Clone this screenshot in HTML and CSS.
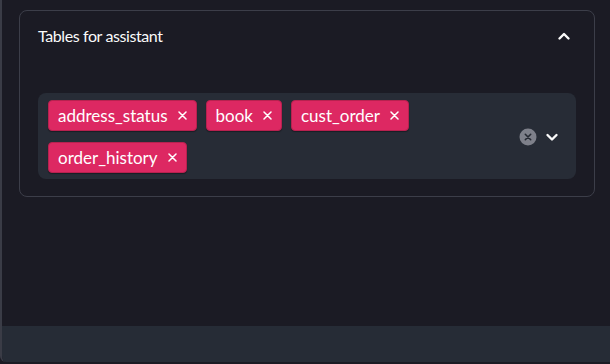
FILE: index.html
```html
<!DOCTYPE html>
<html lang="en">
<head>
    <meta charset="UTF-8">
    <meta name="viewport" content="width=device-width, initial-scale=1.0">
    <title>Tables for assistant</title>
    <link rel="stylesheet" href="styles.css">
</head>
<body>

<div class="frame">
    <div class="main">
        <div class="expander">
            <div class="expander-header">
                <span class="expander-title">Tables for assistant</span>
                <svg class="chevron" width="14" height="10" viewBox="0 0 14 10">
                    <polyline points="2.5,7.5 7,3 11.5,7.5" fill="none" stroke="#fafafa" stroke-width="2.4" stroke-linecap="round" stroke-linejoin="round"/>
                </svg>
            </div>
            <div class="expander-body">
                <div class="multiselect">
                    <div class="tags">
                        <span class="tag">address_status <svg class="tag-x" width="9" height="9" viewBox="0 0 9 9"><path d="M1 1 L8 8 M8 1 L1 8" stroke="#fff" stroke-width="1.5" stroke-linecap="round"/></svg></span>
                        <span class="tag">book <svg class="tag-x" width="9" height="9" viewBox="0 0 9 9"><path d="M1 1 L8 8 M8 1 L1 8" stroke="#fff" stroke-width="1.5" stroke-linecap="round"/></svg></span>
                        <span class="tag">cust_order <svg class="tag-x" width="9" height="9" viewBox="0 0 9 9"><path d="M1 1 L8 8 M8 1 L1 8" stroke="#fff" stroke-width="1.5" stroke-linecap="round"/></svg></span>
                        <span class="tag">order_history <svg class="tag-x" width="9" height="9" viewBox="0 0 9 9"><path d="M1 1 L8 8 M8 1 L1 8" stroke="#fff" stroke-width="1.5" stroke-linecap="round"/></svg></span>
                    </div>
                    <div class="controls">
                        <svg class="clear" width="18" height="18" viewBox="0 0 18 18">
                            <circle cx="9" cy="9" r="8.5" fill="#7e808a"/>
                            <path d="M6.3 6.3 L11.7 11.7 M11.7 6.3 L6.3 11.7" stroke="#262a33" stroke-width="1.6" stroke-linecap="round"/>
                        </svg>
                        <svg class="chevron" width="14" height="10" viewBox="0 0 14 10">
                            <polyline points="2.5,3 7,7.5 11.5,3" fill="none" stroke="#fafafa" stroke-width="2.4" stroke-linecap="round" stroke-linejoin="round"/>
                        </svg>
                    </div>
                </div>
            </div>
        </div>
    </div>
    <div class="bottom-bar"></div>
</div>

</body>
</html>
```

FILE: styles.css
```css
body {
    margin: 0;
    height: 364px;
    overflow: hidden;
    background-color: #1b1b24;
    font-family: Lato, "Liberation Sans", sans-serif;
    color: #fafafa;
}
.frame {
    position: relative;
    height: 362px;
    display: flex;
    flex-direction: column;
    border-left: 2px solid #3a3c46;
    border-bottom-left-radius: 6px;
    overflow: hidden;
}
.frame::before {
    content: "";
    position: absolute;
    left: -2px;
    top: 0;
    width: 2px;
    height: 126px;
    background-color: #8a2141;
}
.main {
    flex: 1;
    padding: 10px 15px 0 17px;
}
.expander {
    border: 1px solid #3c3e49;
    border-radius: 8px;
}
.expander-header {
    height: 49px;
    display: flex;
    align-items: center;
    justify-content: space-between;
    padding: 0 23px 0 18px;
}
.expander-title {
    font-size: 16px;
    letter-spacing: -0.4px;
}
.expander-body {
    padding: 33px 18px 17px 18px;
}
.multiselect {
    height: 86px;
    box-sizing: border-box;
    background-color: #272c36;
    border-radius: 8px;
    padding: 7px 17px 6px 10px;
    display: flex;
    align-items: center;
}
.tags {
    flex: 1;
    display: flex;
    flex-wrap: wrap;
    gap: 11px 9px;
    align-self: flex-start;
    padding-right: 90px;
}
.tag {
    display: inline-flex;
    align-items: center;
    height: 31px;
    box-sizing: border-box;
    padding: 0 9px;
    background-color: #dd2862;
    border: 1px solid #b8214f;
    border-radius: 4px;
    box-shadow: 0 1px 1px rgba(0, 0, 0, 0.35);
    font-size: 17px;
    color: #fff;
}
.tag-x {
    margin-left: 10px;
}
.controls {
    display: flex;
    align-items: center;
    gap: 8px;
}
.bottom-bar {
    height: 36px;
    background-color: #262c36;
}
```
